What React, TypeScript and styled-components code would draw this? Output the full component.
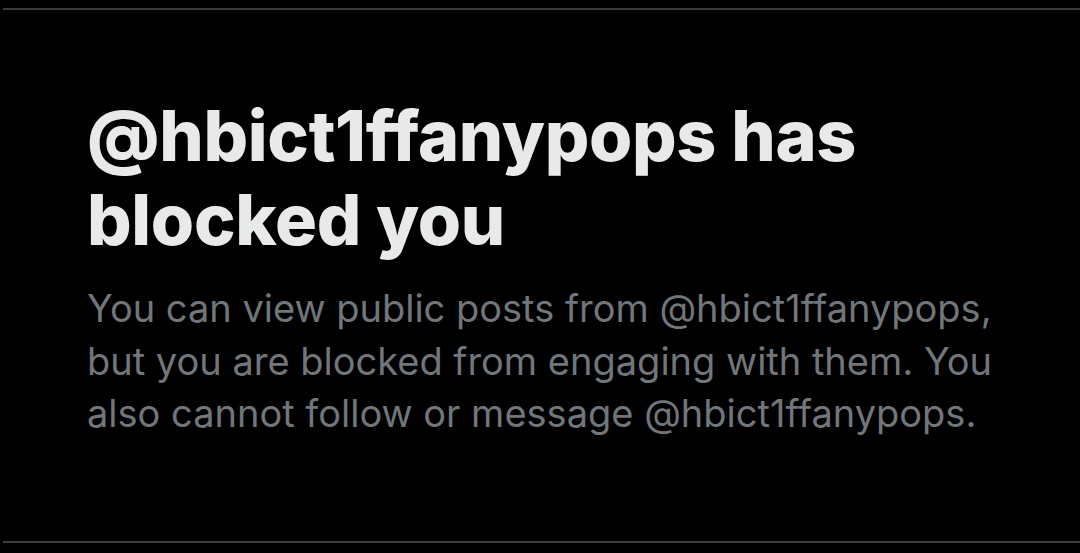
import React from 'react';
import styled, { createGlobalStyle } from 'styled-components';

const GlobalStyle = createGlobalStyle`
  html, body {
    margin: 0;
    padding: 0;
    background: #000;
  }
  body {
    font-family: Inter, "Noto Sans", "Liberation Sans", sans-serif;
    -webkit-font-smoothing: antialiased;
  }
`;

const Screen = styled.div`
  width: 1080px;
  height: 553px;
  background: #000;
  box-sizing: border-box;
  padding: 8px 0 10px 3px;
  display: flex;
`;

const Panel = styled.section`
  flex: 1;
  border-top: 2px solid #3a3b3e;
  border-bottom: 2px solid #3d3d3f;
  box-sizing: border-box;
  padding: 84px 50px 0 84px;
  display: flex;
  flex-direction: column;
  gap: 20px;
`;

const Title = styled.h1`
  margin: 0;
  color: #e7e9ea;
  font-size: 70px;
  font-weight: 800;
  line-height: 84px;
  letter-spacing: -0.3px;
`;

const Message = styled.p`
  margin: 0;
  color: #71767b;
  font-size: 38px;
  font-weight: 400;
  line-height: 52.5px;
  max-width: 925px;
`;

export default function App() {
  const handle = '@hbict1ffanypops';
  return (
    <>
      <GlobalStyle />
      <Screen>
        <Panel>
          <Title>{handle} has blocked you</Title>
          <Message>
            You can view public posts from {handle}, but you are blocked from engaging with them. You
            also cannot follow or message {handle}.
          </Message>
        </Panel>
      </Screen>
    </>
  );
}
